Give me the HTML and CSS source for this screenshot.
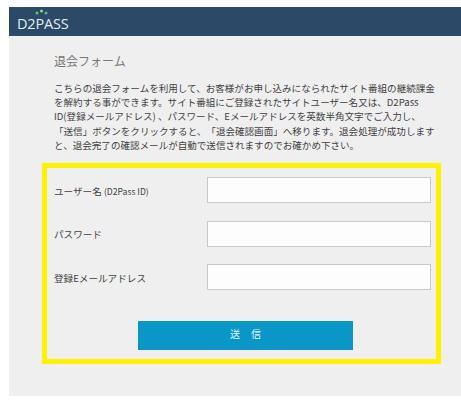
FILE: index.html
```html
<!DOCTYPE html>
<html lang="ja">
<head>
  <meta charset="UTF-8" />
  <meta name="viewport" content="width=device-width, initial-scale=1.0" />
  <title>退会フォーム</title>
  <link rel="stylesheet" href="styles.css">
</head>
<body>
  <div class="panel">
    <div class="header">
      <div class="logo">
        <svg class="logo-dots" width="14" height="6" viewBox="0 0 14 6">
          <circle cx="2" cy="4" r="1.5" fill="#6cc06a" />
          <circle cx="6.5" cy="2" r="1.5" fill="#9ad86a" />
          <circle cx="11" cy="4" r="1.5" fill="#57b896" />
        </svg>
        D2PASS
      </div>
    </div>

    <div class="conteudo">
      <h1>退会フォーム</h1>
      <p class="intro">
        こちらの退会フォームを利用して、お客様がお申し込みになられたサイト番組の継続課金<br>
        を解約する事ができます。サイト番組にご登録されたサイトユーザー名又は、D2Pass<br>
        ID(登録メールアドレス) 、パスワード、Eメールアドレスを英数半角文字でご入力し、<br>
        「送信」ボタンをクリックすると、「退会確認画面」へ移ります。退会処理が成功します<br>
        と、退会完了の確認メールが自動で送信されますのでお確かめ下さい。
      </p>
    </div>

    <div class="formulario">
      <div class="conteudo-input">
        <label for="usuario">ユーザー名 <small>(D2Pass ID)</small></label>
        <input type="text" id="usuario" />
      </div>
      <div class="conteudo-input">
        <label for="senha">パスワード</label>
        <input type="password" id="senha" />
      </div>
      <div class="conteudo-input">
        <label for="email">登録Eメールアドレス</label>
        <input type="text" id="email" />
      </div>
      <button id="enviar-btn">送 信</button>
    </div>
  </div>
</body>
</html>
```

FILE: styles.css
```css
body {
  margin: 0;
  padding: 7px 0 9px 9px;
  background-color: #fff;
  color: #3f3f3f;
  font-family: "Noto Sans CJK JP", "Noto Sans", sans-serif;
  text-spacing-trim: space-all;
}
.panel {
  height: 389px;
  background-color: #efefef;
}
.header {
  height: 29px;
  padding-left: 8px;
  display: flex;
  align-items: center;
  background-color: #2c4a68;
}
.logo {
  position: relative;
  padding-top: 3px;
  color: #e6edf2;
  font-family: "Open Sans", sans-serif;
  font-size: 14.5px;
  letter-spacing: -0.2px;
}
.logo-dots {
  position: absolute;
  left: 18px;
  top: -2px;
}
.conteudo {
  padding: 16px 0 0 45px;
}
h1 {
  margin: 0;
  color: #777;
  font-size: 12px;
  font-weight: normal;
  line-height: 18px;
}
.intro {
  margin: 11px 0 0;
  font-size: 9.55px;
  line-height: 14.2px;
  white-space: nowrap;
}
.formulario {
  width: 384px;
  height: 182px;
  margin: 11px 0 0 33px;
  padding: 9px 5px 0 0;
  display: flex;
  flex-direction: column;
  gap: 17.5px;
  border: 5px solid #fff200;
}
.conteudo-input {
  display: flex;
  align-items: center;
  justify-content: space-between;
  padding-left: 7px;
  font-size: 9.6px;
}
.conteudo-input small {
  font-size: 8.6px;
}
.conteudo-input label {
  padding-top: 1px;
}
input {
  width: 224px;
  height: 26px;
  padding: 0;
  box-sizing: border-box;
  border: 1px solid #c9c9c9;
  background-color: #fdfdfd;
}
button {
  width: 215px;
  height: 29px;
  margin: 13px 0 0 91px;
  padding: 0 0 3px;
  border: none;
  background-color: #0a97c8;
  color: #e8f6fb;
  font-family: inherit;
  font-size: 10px;
  word-spacing: 9px;
}
```
